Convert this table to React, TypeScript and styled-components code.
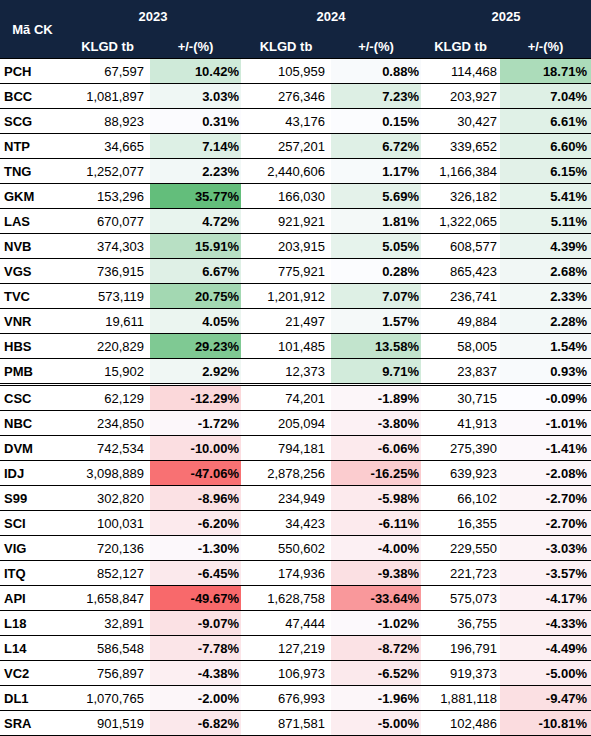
import React from 'react';
import styled, { createGlobalStyle } from 'styled-components';

const GlobalStyle = createGlobalStyle`
  html, body { margin: 0; padding: 0; background: #ffffff; }
  body { font-family: "Liberation Sans", Arial, sans-serif; color: #000; }
`;

const COLS = '65px 85px 91px 90px 90px 79px 91px';

type Year = { vol: string; pct: string };
type Row = { code: string; years: [Year, Year, Year] };

const raw: string[] = [
  'PCH|67,597|10.42|105,959|0.88|114,468|18.71',
  'BCC|1,081,897|3.03|276,346|7.23|203,927|7.04',
  'SCG|88,923|0.31|43,176|0.15|30,427|6.61',
  'NTP|34,665|7.14|257,201|6.72|339,652|6.60',
  'TNG|1,252,077|2.23|2,440,606|1.17|1,166,384|6.15',
  'GKM|153,296|35.77|166,030|5.69|326,182|5.41',
  'LAS|670,077|4.72|921,921|1.81|1,322,065|5.11',
  'NVB|374,303|15.91|203,915|5.05|608,577|4.39',
  'VGS|736,915|6.67|775,921|0.28|865,423|2.68',
  'TVC|573,119|20.75|1,201,912|7.07|236,741|2.33',
  'VNR|19,611|4.05|21,497|1.57|49,884|2.28',
  'HBS|220,829|29.23|101,485|13.58|58,005|1.54',
  'PMB|15,902|2.92|12,373|9.71|23,837|0.93',
  'CSC|62,129|-12.29|74,201|-1.89|30,715|-0.09',
  'NBC|234,850|-1.72|205,094|-3.80|41,913|-1.01',
  'DVM|742,534|-10.00|794,181|-6.06|275,390|-1.41',
  'IDJ|3,098,889|-47.06|2,878,256|-16.25|639,923|-2.08',
  'S99|302,820|-8.96|234,949|-5.98|66,102|-2.70',
  'SCI|100,031|-6.20|34,423|-6.11|16,355|-2.70',
  'VIG|720,136|-1.30|550,602|-4.00|229,550|-3.03',
  'ITQ|852,127|-6.45|174,936|-9.38|221,723|-3.57',
  'API|1,658,847|-49.67|1,628,758|-33.64|575,073|-4.17',
  'L18|32,891|-9.07|47,444|-1.02|36,755|-4.33',
  'L14|586,548|-7.78|127,219|-8.72|196,791|-4.49',
  'VC2|756,897|-4.38|106,973|-6.52|919,373|-5.00',
  'DL1|1,070,765|-2.00|676,993|-1.96|1,881,118|-9.47',
  'SRA|901,519|-6.82|871,581|-5.00|102,486|-10.81',
];

const rows: Row[] = raw.map((line) => {
  const p = line.split('|');
  return {
    code: p[0],
    years: [
      { vol: p[1], pct: p[2] },
      { vol: p[3], pct: p[4] },
      { vol: p[5], pct: p[6] },
    ],
  };
});

const allPct = rows.flatMap((r) => r.years.map((y) => parseFloat(y.pct)));
const MAX = Math.max(...allPct);
const MIN = Math.min(...allPct);

const mix = (a: number[], b: number[], t: number) =>
  `rgb(${a.map((v, i) => Math.round(v + (b[i] - v) * t)).join(',')})`;

const WHITE = [252, 252, 255];
const GREEN = [99, 190, 123];
const RED = [248, 105, 107];

const scaleColor = (v: number) =>
  v >= 0 ? mix(WHITE, GREEN, v / MAX) : mix(WHITE, RED, v / MIN);

const Table = styled.div`
  width: 591px;
  font-size: 13px;
`;

const Header = styled.div`
  display: grid;
  grid-template-columns: ${COLS};
  grid-template-rows: 32px 26px;
  background: #13243f;
  color: #ffffff;
  font-weight: 700;
  border-bottom: 1px solid #000;
`;

const HeadCell = styled.div<{ $col: string; $row: string; $sub?: boolean }>`
  grid-column: ${(p) => p.$col};
  grid-row: ${(p) => p.$row};
  display: flex;
  align-items: center;
  justify-content: center;
  padding-top: ${(p) => (p.$sub ? '3px' : '0')};
`;

const BodyRow = styled.div<{ $double?: boolean }>`
  display: grid;
  grid-template-columns: ${COLS};
  height: 24px;
  border-bottom: ${(p) => (p.$double ? '3px double #000' : '1px solid #000')};
`;

const Ticker = styled.div`
  display: flex;
  align-items: center;
  padding-left: 4px;
  font-weight: 700;
`;

const Volume = styled.div<{ $pad: number }>`
  display: flex;
  align-items: center;
  justify-content: flex-end;
  padding-right: ${(p) => p.$pad}px;
`;

const Change = styled.div<{ $pad: number; $bg: string }>`
  display: flex;
  align-items: center;
  justify-content: flex-end;
  padding-right: ${(p) => p.$pad}px;
  font-weight: 700;
  background: ${(p) => p.$bg};
`;

const volPad = [6, 6, 3];
const pctPad = [2, 2, 4];
const yearsLabel = ['2023', '2024', '2025'];

export default function App() {
  return (
    <>
      <GlobalStyle />
      <Table>
        <Header>
          <HeadCell $col="1" $row="1 / span 2">Mã CK</HeadCell>
          {yearsLabel.map((y, i) => (
            <HeadCell key={y} $col={`${2 + i * 2} / span 2`} $row="1">
              {y}
            </HeadCell>
          ))}
          {yearsLabel.map((y, i) => (
            <React.Fragment key={`s${y}`}>
              <HeadCell $col={`${2 + i * 2}`} $row="2" $sub>
                KLGD tb
              </HeadCell>
              <HeadCell $col={`${3 + i * 2}`} $row="2" $sub>
                +/-(%)
              </HeadCell>
            </React.Fragment>
          ))}
        </Header>
        {rows.map((r) => (
          <BodyRow key={r.code} $double={r.code === 'PMB'}>
            <Ticker>{r.code}</Ticker>
            {r.years.map((y, i) => (
              <React.Fragment key={i}>
                <Volume $pad={volPad[i]}>{y.vol}</Volume>
                <Change $pad={pctPad[i]} $bg={scaleColor(parseFloat(y.pct))}>
                  {y.pct}%
                </Change>
              </React.Fragment>
            ))}
          </BodyRow>
        ))}
      </Table>
    </>
  );
}
